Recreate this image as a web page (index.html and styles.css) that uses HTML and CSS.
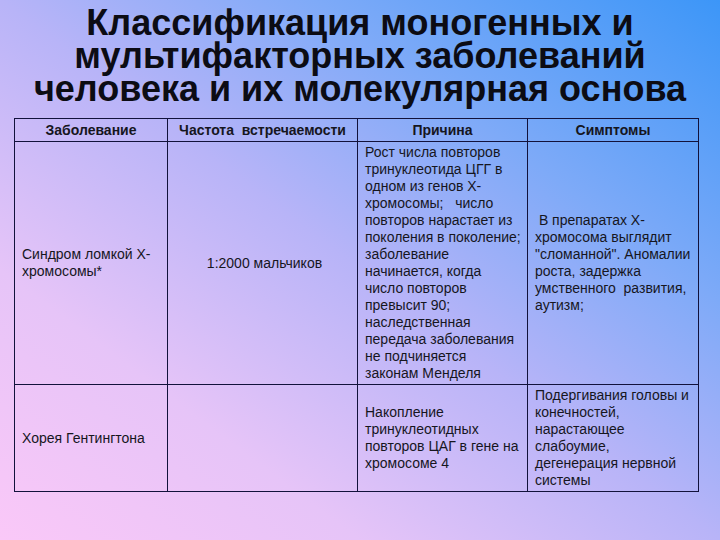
FILE: index.html
```html
<!DOCTYPE html>
<html lang="ru">
<head>
<meta charset="utf-8">
<title>Классификация моногенных и мультифакторных заболеваний</title>
<link rel="stylesheet" href="styles.css">
</head>
<body>
<div class="slide">
  <h1 class="title">Классификация моногенных и<br>мультифакторных заболеваний<br>человека и их молекулярная основа</h1>
  <table class="grid">
    <colgroup>
      <col class="c1"><col class="c2"><col class="c3"><col class="c4">
    </colgroup>
    <thead>
      <tr>
        <th>Заболевание</th>
        <th>Частота&nbsp; встречаемости</th>
        <th>Причина</th>
        <th>Симптомы</th>
      </tr>
    </thead>
    <tbody>
      <tr class="r1">
        <td>Синдром ломкой Х-<br>хромосомы*</td>
        <td class="center">1:2000 мальчиков</td>
        <td>Рост числа повторов<br>тринуклеотида ЦГГ в<br>одном из генов Х-<br>хромосомы; &nbsp; число<br>повторов нарастает из<br>поколения в поколение;<br>заболевание<br>начинается, когда<br>число повторов<br>превысит 90;<br>наследственная<br>передача заболевания<br>не подчиняется<br>законам Менделя</td>
        <td>&nbsp;В препаратах Х-<br>хромосома выглядит<br>"сломанной". Аномалии<br>роста, задержка<br>умственного&nbsp; развития,<br>аутизм;</td>
      </tr>
      <tr class="r2">
        <td>Хорея Гентингтона</td>
        <td></td>
        <td>Накопление<br>тринуклеотидных<br>повторов ЦАГ в гене на<br>хромосоме 4</td>
        <td>Подергивания головы и<br>конечностей,<br>нарастающее<br>слабоумие,<br>дегенерация нервной<br>системы</td>
      </tr>
    </tbody>
  </table>
</div>
</body>
</html>
```
FILE: styles.css
```css
html, body {
  margin: 0;
  padding: 0;
}
body {
  width: 720px;
  height: 540px;
  overflow: hidden;
  font-family: "Liberation Sans", Arial, sans-serif;
  color: #16161e;
  background: linear-gradient(to top right, #fac8f8 0%, #e6c4f8 25%, #b8b4f8 50%, #7eaaf8 72%, #3c96f8 100%);
}
.slide {
  display: flex;
  flex-direction: column;
  padding-top: 6px;
}
.title {
  margin: 0;
  font-size: 36px;
  line-height: 33px;
  font-weight: bold;
  text-align: center;
  color: #0c0c14;
}
.grid {
  margin: 13px 0 0 14px;
  width: 684px;
  border-collapse: collapse;
  table-layout: fixed;
  font-size: 14px;
  line-height: 17px;
}
.c1 { width: 153px; }
.c2 { width: 190px; }
.c3 { width: 170px; }
.c4 { width: 171px; }
.grid th, .grid td {
  border: 1px solid #12123c;
}
.grid th {
  height: 22px;
  padding: 0 2px;
  font-size: 14px;
  font-weight: bold;
  text-align: center;
  white-space: nowrap;
}
.grid td {
  padding: 2px 3px 2px 7px;
  vertical-align: middle;
  text-align: left;
  white-space: nowrap;
}
.grid td.center {
  text-align: center;
}
```
